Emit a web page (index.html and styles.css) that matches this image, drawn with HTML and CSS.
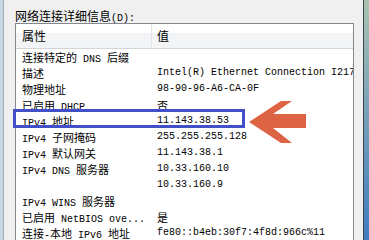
FILE: index.html
```html
<!DOCTYPE html>
<html lang="zh-CN">
<head>
    <meta charset="UTF-8">
    <meta name="viewport" content="width=device-width, initial-scale=1.0">
    <title>网络连接详细信息</title>
    <link rel="stylesheet" href="styles.css">
</head>
<body>
    <div class="edge-left"></div>
    <div class="pane">
        <div class="caption">网络连接详细信息<span class="l">(D):</span></div>
        <div class="list">
            <div class="head">
                <div class="col-name">属性</div>
                <div class="col-value">值</div>
            </div>
            <div class="row"><div class="name">连接特定的<span class="l"> DNS </span>后缀</div><div class="value"></div></div>
            <div class="row"><div class="name">描述</div><div class="value">Intel(R) Ethernet Connection I217</div></div>
            <div class="row"><div class="name">物理地址</div><div class="value">98-90-96-A6-CA-0F</div></div>
            <div class="row"><div class="name">已启用<span class="l"> DHCP</span></div><div class="value"><span class="c">否</span></div></div>
            <div class="row"><div class="name"><span class="l">IPv4 </span>地址</div><div class="value">11.143.38.53</div></div>
            <div class="row"><div class="name"><span class="l">IPv4 </span>子网掩码</div><div class="value">255.255.255.128</div></div>
            <div class="row"><div class="name"><span class="l">IPv4 </span>默认网关</div><div class="value">11.143.38.1</div></div>
            <div class="row"><div class="name"><span class="l">IPv4 DNS </span>服务器</div><div class="value">10.33.160.10</div></div>
            <div class="row"><div class="name"></div><div class="value">10.33.160.9</div></div>
            <div class="row"><div class="name"><span class="l">IPv4 WINS </span>服务器</div><div class="value"></div></div>
            <div class="row"><div class="name">已启用<span class="l"> NetBIOS ove...</span></div><div class="value"><span class="c">是</span></div></div>
            <div class="row"><div class="name">连接<span class="l">-</span>本地<span class="l"> IPv6 </span>地址</div><div class="value">fe80::b4eb:30f7:4f8d:966c%11</div></div>
        </div>
    </div>
    <div class="edge-right"></div>

    <div class="mark"></div>
    <svg class="arrow" width="66" height="46" viewBox="0 0 66 46">
        <polygon points="4,23 36,2 47,2 28,15 61,15 61,29 28,29 47,44 36,44" fill="#dc6445"/>
    </svg>
</body>
</html>
```

FILE: styles.css
```css
body {
    margin: 0;
    height: 240px;
    overflow: hidden;
    display: flex;
    background: #f0f0f0;
    font-family: "Noto Sans CJK SC", sans-serif;
    color: #000;
}
.edge-left {
    width: 3px;
    background: #c8d6e6;
    border-right: 1px solid #a3abb5;
}
.pane {
    width: 339px;
    padding: 8px 9px 0 11px;
}
.caption {
    height: 15px;
    line-height: 15px;
    font-size: 12px;
}
.l {
    font-family: "Liberation Mono", monospace;
    font-size: 10px;
    white-space: pre;
}
.c {
    font-family: "Noto Sans CJK SC", sans-serif;
    font-size: 11px;
}
.list {
    background: #fff;
    border: 1px solid #828790;
    border-bottom: none;
    height: 217px;
    overflow: hidden;
}
.head {
    display: grid;
    grid-template-columns: 136px 1fr;
    height: 24px;
    line-height: 24px;
    font-size: 12px;
    background: linear-gradient(#fff 0 9px, #f3f4f6 9px);
    border-bottom: 1px solid #d5d5d5;
}
.head .col-name {
    padding-left: 6px;
    border-right: 1px solid #e3e4e8;
}
.head .col-value {
    padding-left: 5px;
}
.row {
    display: grid;
    grid-template-columns: 136px 1fr;
    height: 16px;
    line-height: 16px;
    white-space: nowrap;
}
.name {
    padding-left: 6px;
    font-size: 11px;
    overflow: hidden;
}
.value {
    padding-left: 5px;
    font-family: "Liberation Mono", monospace;
    font-size: 10px;
    overflow: hidden;
}
.edge-right {
    width: 5px;
    border-left: 1px solid #37444e;
    background: linear-gradient(#a9c3b0, #7fa6b8 40%, #3f7bc0);
}
.mark {
    position: absolute;
    left: 13px;
    top: 109px;
    width: 226px;
    height: 13px;
    border: 3px solid #4250c8;
}
.arrow {
    position: absolute;
    left: 245px;
    top: 99px;
}
```
